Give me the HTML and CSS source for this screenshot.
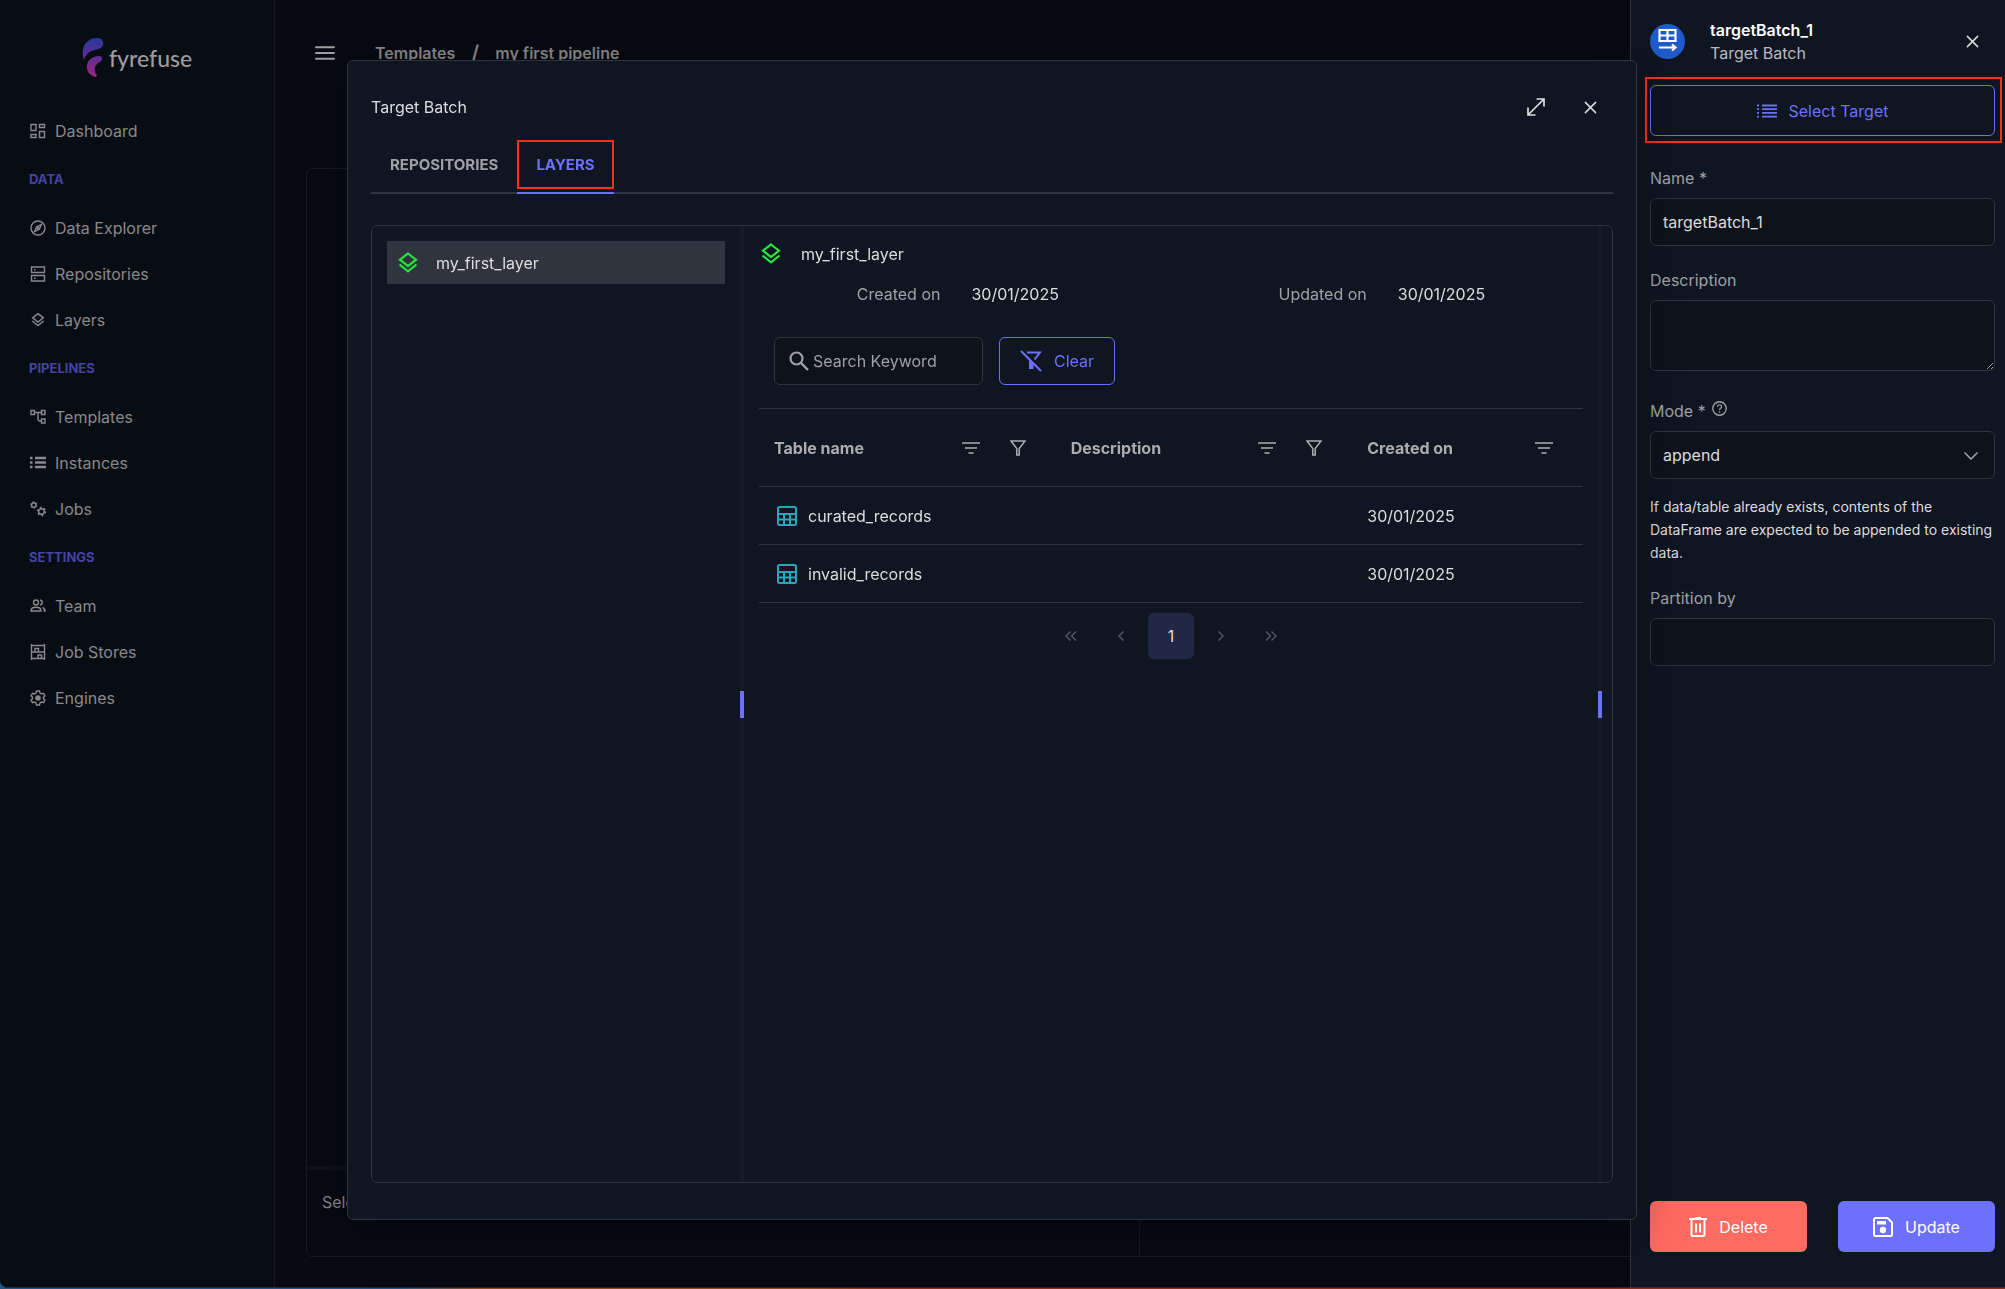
FILE: index.html
```
<!DOCTYPE html>
<html lang="en">
<head>
  <meta charset="UTF-8" />
  <title>Fyrefuse - my first pipeline</title>
  <meta name="viewport" content="width=device-width, initial-scale=1.0" />
  <link rel="stylesheet" href="styles.css">
</head>
<body>
  <!-- shared icons -->
  <svg width="0" height="0" class="sprite" aria-hidden="true">
    <symbol id="i-layers" viewBox="0 0 24 24"><path d="M12 2.5 20 8.7 12 15 4 8.7z M3.5 13.5 12 20.3 20.5 13.5" fill="none" stroke="currentColor" stroke-width="2.2"/></symbol>
    <symbol id="i-close" viewBox="0 0 14 14"><path d="M1.5 1.5 12.5 12.5M12.5 1.5 1.5 12.5" fill="none" stroke="currentColor" stroke-width="1.6" stroke-linecap="round"/></symbol>
    <symbol id="i-sort" viewBox="0 0 18 12"><path d="M0 1h18M3 6h12M6.500 11h5" fill="none" stroke="currentColor" stroke-width="1.600"/></symbol>
    <symbol id="i-filter" viewBox="0 0 16 16"><path d="M1 1h14L9.200 8.500V15H6.800V8.500z" fill="none" stroke="currentColor" stroke-width="1.500"/></symbol>
    <symbol id="i-table" viewBox="0 0 20 20"><path d="M1 2.500Q1 1 2.500 1h15Q19 1 19 2.500v15q0 1.500-1.500 1.500h-15Q1 19 1 17.500zM1 8h18M1 13.500h18M7 8v11M13 8v11" fill="none" stroke="currentColor" stroke-width="2"/></symbol>
  </svg>

  <div class="app">
    <aside class="sidebar">
      <div class="logo">
        <svg width="22" height="40" viewBox="0 0 22 40">
          <defs>
            <linearGradient id="flame" x1="0" y1="0" x2="0" y2="40" gradientUnits="userSpaceOnUse">
              <stop offset="0" stop-color="#26389c" /><stop offset="1" stop-color="#a02483" />
            </linearGradient>
          </defs>
          <path fill="url(#flame)" d="M2 22C-2 10 4 0 15 0c5 0 7 3 6 7-1 3-4 4-8 5-6 1-9 4-11 10z" />
          <path fill="url(#flame)" d="M14 39C8 38 4 33 5 27 6 21 12 18 17 18c4 0 4 4 1 6-4 2-6 5-5 9 0 2 1 3 2 4z" />
        </svg>
        <span>fyrefuse</span>
      </div>

      <nav class="menu">
        <a class="menu-item" href="#">
          <svg viewBox="0 0 16 16"><path d="M1 1.500h5v6H1zM9.500 1.500h5v3h-5zM1 11.500h5v3H1zM9.500 8.500h5v6h-5z" /></svg>
          Dashboard
        </a>
        <h2 class="menu-heading">DATA</h2>
        <a class="menu-item" href="#">
          <svg viewBox="0 0 16 16"><circle cx="8" cy="8" r="7" /><path d="M11.500 4.500 9.300 9.300 4.500 11.500 6.700 6.700z" /><circle cx="8" cy="8" r="1" /></svg>
          Data Explorer
        </a>
        <a class="menu-item" href="#">
          <svg viewBox="0 0 16 16"><path d="M1.500 1h13v5.500h-13zM1.500 9.500h13V15h-13zM4 3.800h1.500M4 12.200h1.500" /></svg>
          Repositories
        </a>
        <a class="menu-item" href="#">
          <svg viewBox="0 0 24 24"><use href="#i-layers" /></svg>
          Layers
        </a>
        <h2 class="menu-heading">PIPELINES</h2>
        <a class="menu-item" href="#">
          <svg viewBox="0 0 16 16"><path d="M1 1.500h3.500v4H1zM11.500 1.500H15v4h-3.500zM11.500 10H15v4h-3.500zM4.500 3.500h7M8 3.500V10q0 2 2 2h1.500" /></svg>
          Templates
        </a>
        <a class="menu-item" href="#">
          <svg viewBox="0 0 16 16"><path class="thick" d="M0 3h2.500M5 3h11M0 7.500h2.500M5 7.500h11M0 12h2.500M5 12h11" /></svg>
          Instances
        </a>
        <a class="menu-item" href="#">
          <svg viewBox="0 0 16 16"><circle cx="3.800" cy="4" r="2.200" /><circle cx="3.800" cy="4" r="3.200" stroke-width="1" stroke-dasharray="1.700 1.650" /><circle cx="11.500" cy="10.500" r="2.800" /><circle cx="11.500" cy="10.500" r="4" stroke-width="1.400" stroke-dasharray="2 2.190" /></svg>
          Jobs
        </a>
        <h2 class="menu-heading">SETTINGS</h2>
        <a class="menu-item" href="#">
          <svg viewBox="0 0 16 16"><circle cx="6" cy="4.500" r="2.500" /><path d="M1 13c0-5 10-5 10 0zM10 2c3 .5 3 4.500 0 5M12.500 9.500c2 .8 2.500 2 2.500 3.500h-1.500" /></svg>
          Team
        </a>
        <a class="menu-item" href="#">
          <svg viewBox="0 0 16 16"><path d="M1.500 0v16M14.500 0v16M1.500 1.500h13M1.500 8h13M1.500 14.500h13M5 8V4.500h3.500V8M8 14.500V11h3.500v3.500" /></svg>
          Job Stores
        </a>
        <a class="menu-item" href="#">
          <svg viewBox="0 0 16 16"><path d="M6.500 1h3l.5 2 1.500.9 2-.6 1.400 2.500L13.500 7.200v1.600l1.400 1.400-1.400 2.500-2-.6L10 13l-.5 2h-3L6 13l-1.500-.9-2 .6-1.400-2.500 1.400-1.400V7.200L1.100 5.800l1.400-2.500 2 .6L6 3z" /><circle cx="8" cy="8" r="2.800" fill="currentColor" stroke="none" /></svg>
          Engines
        </a>
      </nav>
    </aside>

    <main class="main">
      <header class="topbar">
        <button class="icon-btn" aria-label="Toggle menu">
          <svg width="20" height="14" viewBox="0 0 20 14"><path d="M1 1.200h18M1 7h18M1 12.800h18" fill="none" stroke="currentColor" stroke-width="2" stroke-linecap="round" /></svg>
        </button>
        <nav class="breadcrumb"><a href="#">Templates</a><span class="slash">/</span><a href="#">my first pipeline</a></nav>
      </header>
      <section class="canvas">
        <div class="canvas-board"></div>
        <div class="canvas-log">
          <p>Select a node</p>
          <div></div>
        </div>
      </section>
    </main>
  </div>

  <aside class="drawer">
    <header class="drawer-header">
      <svg class="node-icon" width="35" height="35" viewBox="0 0 35 35">
        <circle cx="17.500" cy="17.500" r="17.500" fill="#1f5bcb" />
        <path d="M9.500 6h16v11h-16zM17.500 6v11M9.500 11.500h16M9 23.500h16M22 20.500l3.500 3-3.500 3" fill="none" stroke="#fff" stroke-width="2.200" />
      </svg>
      <div class="drawer-title">
        <strong>targetBatch_1</strong>
        <span>Target Batch</span>
      </div>
      <button class="icon-btn" aria-label="Close panel"><svg width="13" height="13"><use href="#i-close" /></svg></button>
    </header>

    <div class="highlight">
      <button class="btn btn-outline btn-block">
        <svg width="20" height="14" viewBox="0 0 20 14"><path d="M0 1.500h2M5 1.500h15M0 5.200h2M5 5.200h15M0 8.900h2M5 8.900h15M0 12.600h2M5 12.600h15" fill="none" stroke="currentColor" stroke-width="1.800" /></svg>
        Select Target
      </button>
    </div>

    <form class="form">
      <div class="field">
        <label for="name">Name *</label>
        <input id="name" type="text" value="targetBatch_1">
      </div>
      <div class="field field-area">
        <label for="description">Description</label>
        <textarea id="description"></textarea>
      </div>
      <div class="field">
        <label for="mode">Mode *
          <svg width="15" height="15" viewBox="0 0 16 16"><circle cx="8" cy="8" r="7.200" fill="none" stroke="currentColor" stroke-width="1.400" /><path d="M5.800 6.200c0-3 4.400-2.800 4.400-.2C10.200 7.800 8 7.600 8 9.600M8 11v1.500" fill="none" stroke="currentColor" stroke-width="1.300" /></svg>
        </label>
        <div class="select">
          <select id="mode"><option>append</option></select>
          <svg width="14" height="8" viewBox="0 0 14 8"><path d="M1 1l6 6 6-6" fill="none" stroke="currentColor" stroke-width="1.600" stroke-linecap="round" /></svg>
        </div>
        <p class="help">If data/table already exists, contents of the DataFrame are expected to be appended to existing data.</p>
      </div>
      <div class="field">
        <label for="partition">Partition by</label>
        <input id="partition" type="text">
      </div>
    </form>

    <footer class="drawer-footer">
      <button class="btn btn-danger">
        <svg width="18" height="20" viewBox="0 0 18 20"><path d="M0 2h18M6 1h6M2.500 3v14.500Q2.500 19 4 19h10q1.500 0 1.500-1.500V3M7 6.500v9M11 6.500v9" fill="none" stroke="currentColor" stroke-width="2" /></svg>
        Delete
      </button>
      <button class="btn btn-primary">
        <svg width="20" height="20" viewBox="0 0 20 20"><path d="M1 2.500Q1 1 2.500 1H14.500L19 5.500v12q0 1.500-1.500 1.500h-15Q1 19 1 17.500z" fill="none" stroke="currentColor" stroke-width="2" /><path d="M4 4h9v3.500H4z" fill="currentColor" /><circle cx="10" cy="13" r="3.200" fill="currentColor" /></svg>
        Update
      </button>
    </footer>
  </aside>

  <div class="dialog" role="dialog" aria-label="Target Batch">
    <header class="dialog-header">
      <h1>Target Batch</h1>
      <button class="icon-btn" aria-label="Maximize"><svg width="18" height="18" viewBox="0 0 18 18"><path d="M1.500 16.500 16.500 1.500M9.500 1h7.500v7.500M1 9.500V17h7.500" fill="none" stroke="currentColor" stroke-width="1.700" /></svg></button>
      <button class="icon-btn" aria-label="Close"><svg width="13" height="13"><use href="#i-close" /></svg></button>
    </header>

    <div class="tabs" role="tablist">
      <button class="tab" role="tab">REPOSITORIES</button>
      <button class="tab active" role="tab" aria-selected="true">LAYERS</button>
    </div>

    <div class="splitter">
      <div class="layer-list">
        <button class="layer-item"><svg width="24" height="24"><use href="#i-layers" /></svg>my_first_layer</button>
      </div>
      <div class="gutter"><span></span></div>

      <div class="layer-detail">
        <div class="layer-name"><svg width="24" height="24"><use href="#i-layers" /></svg>my_first_layer</div>
        <dl class="dates">
          <div><dt>Created on</dt><dd>30/01/2025</dd></div>
          <div><dt>Updated on</dt><dd>30/01/2025</dd></div>
        </dl>

        <div class="toolbar">
          <div class="search">
            <svg width="20" height="20" viewBox="0 0 20 20"><circle cx="7.500" cy="7.500" r="6" fill="none" stroke="currentColor" stroke-width="2.200" /><path d="M12 12l7 7" stroke="currentColor" stroke-width="2.400" /></svg>
            <input type="text" placeholder="Search Keyword" aria-label="Search Keyword">
          </div>
          <button class="btn btn-outline btn-clear">
            <svg width="22" height="22" viewBox="0 0 22 22"><path d="M1 1l20 20M7 2.500h13l-5.500 7" fill="none" stroke="currentColor" stroke-width="2" /><path d="M9 10l4.500 4.500V19H9z" fill="currentColor" /></svg>
            Clear
          </button>
        </div>

        <table class="records">
          <colgroup><col class="col-name"><col class="col-desc"><col></colgroup>
          <thead>
            <tr>
              <th><div class="th"><span>Table name</span><svg width="18" height="12"><use href="#i-sort" /></svg><svg width="16" height="16"><use href="#i-filter" /></svg></div></th>
              <th><div class="th"><span>Description</span><svg width="18" height="12"><use href="#i-sort" /></svg><svg width="16" height="16"><use href="#i-filter" /></svg></div></th>
              <th><div class="th"><span>Created on</span><svg width="18" height="12"><use href="#i-sort" /></svg></div></th>
            </tr>
          </thead>
          <tbody>
            <tr>
              <td><div class="record"><svg width="20" height="20"><use href="#i-table" /></svg>curated_records</div></td>
              <td></td>
              <td>30/01/2025</td>
            </tr>
            <tr>
              <td><div class="record"><svg width="20" height="20"><use href="#i-table" /></svg>invalid_records</div></td>
              <td></td>
              <td>30/01/2025</td>
            </tr>
          </tbody>
        </table>

        <div class="paginator">
          <button disabled aria-label="First page"><svg width="12" height="10" viewBox="0 0 12 10"><path d="M5.500 .5 1 5l4.500 4.500M11 .5 6.500 5 11 9.500" /></svg></button>
          <button disabled aria-label="Previous page"><svg width="6" height="10" viewBox="0 0 6 10"><path d="M5.500 .5 1 5l4.500 4.500" /></svg></button>
          <button class="current">1</button>
          <button disabled aria-label="Next page"><svg width="6" height="10" viewBox="0 0 6 10"><path d="M.5 .5 5 5 .5 9.500" /></svg></button>
          <button disabled aria-label="Last page"><svg width="12" height="10" viewBox="0 0 12 10"><path d="M1 .5 5.500 5 1 9.500M6.500 .5 11 5 6.500 9.500" /></svg></button>
        </div>
      </div>

      <div class="gutter"><span></span></div>
      <div class="spare"></div>
    </div>
  </div>
</body>
</html>
```

FILE: styles.css
```
* { box-sizing: border-box; margin: 0; padding: 0; }

:root {
  --surface: #0f1521;
  --input: #0e121b;
  --border: #30343f;
  --text: #dddddf;
  --muted: #a0a1a6;
  --primary: #6c70fb;
  --mark: #fb301c;
}

html, body { height: 100%; overflow: hidden; }
body {
  font-family: Inter, "Open Sans", sans-serif;
  font-size: 16px;
  line-height: 24px;
  color: var(--text);
  background: linear-gradient(to right, #265480 20%, #8a4a1c 24%, #8a4a1c 40%, #8a2a1c 44%);
}
button, input, select, textarea { font: inherit; color: inherit; }
button { background: none; border: 0; cursor: pointer; }
a { color: inherit; text-decoration: none; }
svg { flex: none; display: block; }
.sprite { position: absolute; }

.icon-btn {
  display: flex;
  align-items: center;
  justify-content: center;
  width: 46px;
  height: 46px;
}

/* PAGE BEHIND THE DIALOG */
.app {
  display: flex;
  height: calc(100% - 1px);
  background: #070a12;
  border-bottom: 1px solid #26272b;
  border-bottom-left-radius: 8px;
  color: #88898b;
}
.sidebar {
  width: 275px;
  background: #080d14;
  border-right: 1px solid #181b22;
  border-bottom-left-radius: 8px;
}
.logo {
  display: flex;
  align-items: center;
  gap: 5px;
  height: 70px;
  margin: 23px 0 15px 82px;
  font-family: Lato, sans-serif;
  font-size: 23px;
  font-weight: 500;
  color: #9b9c9d;
}
.menu-item {
  display: flex;
  align-items: center;
  gap: 9px;
  height: 46px;
  padding-left: 30px;
}
.menu-item svg {
  width: 16px;
  height: 16px;
  fill: none;
  stroke: currentColor;
  stroke-width: 1.4px;
}
.menu-item .thick { stroke-width: 2.6px; }
.menu-heading {
  height: 51px;
  padding-left: 29px;
  font-size: 13px;
  line-height: 50px;
  font-weight: 700;
  color: #4344a2;
}

.main {
  flex: 1;
  display: flex;
  flex-direction: column;
  min-width: 0;
  padding: 30px 31px 30px;
}
.topbar {
  display: flex;
  align-items: center;
  height: 46px;
  margin-left: -4px;
  color: #a0a0a1;
}
.breadcrumb {
  display: flex;
  margin-left: 27px;
  font-weight: 600;
  color: #88898b;
}
.slash {
  width: 40px;
  text-align: center;
  font-size: 20px;
}
.canvas {
  flex: 1;
  display: flex;
  flex-direction: column;
  margin-top: 92px;
  border: 1px solid #181b22;
  border-radius: 6px;
}
.canvas-board { flex: 1; }
.canvas-log {
  display: grid;
  grid-template-columns: 1fr 1fr;
  height: 90px;
  border-top: 4px solid #0d1119;
}
.canvas-log p { padding: 20px 15px; border-right: 1px solid #181b22; }

/* RIGHT DRAWER */
.drawer {
  position: fixed;
  top: 0;
  right: 0;
  bottom: 1px;
  width: 375px;
  display: flex;
  flex-direction: column;
  padding: 18px 10px 35px 19px;
  background: var(--surface);
  border-left: 1px solid var(--border);
  border-bottom: 1px solid var(--border);
}
.drawer-header {
  display: flex;
  align-items: center;
  height: 47px;
  margin-bottom: 20px;
}
.drawer-title {
  flex: 1;
  display: flex;
  flex-direction: column;
  margin-left: 25px;
  line-height: 23px;
  color: #b9babd;
}
.drawer-title strong { font-weight: 600; color: #fff; }
.highlight { position: relative; margin-bottom: 30px; }
.highlight::after {
  content: "";
  position: absolute;
  inset: -8px -7px -7px -5px;
  border: 2px solid var(--mark);
  pointer-events: none;
}

.btn {
  display: flex;
  align-items: center;
  justify-content: center;
  gap: 12px;
  height: 51px;
  border-radius: 6px;
}
.btn-block { width: 100%; }
.btn-outline { border: 1px solid var(--primary); color: var(--primary); }
.btn-danger { background: #ff6a61; color: #fff; }
.btn-primary { background: var(--primary); color: #fff; }

.field { display: flex; flex-direction: column; margin-bottom: 22px; }
.field-area { margin-bottom: 28px; }
.field label {
  display: flex;
  gap: 6px;
  margin-bottom: 8px;
  color: var(--muted);
}
.field label svg { margin-top: 2px; }
input, textarea, select {
  width: 100%;
  height: 48px;
  padding: 0 12px;
  background: var(--input);
  border: 1px solid var(--border);
  border-radius: 6px;
  outline: 0;
}
textarea { height: 71px; }
.select { position: relative; }
select { appearance: none; }
.select svg {
  position: absolute;
  top: 21px;
  right: 17px;
  color: var(--muted);
  pointer-events: none;
}
.help { margin-top: 16px; font-size: 14px; line-height: 23px; }
.drawer-footer {
  display: grid;
  grid-template-columns: 1fr 1fr;
  gap: 31px;
  margin-top: auto;
}

/* DIALOG */
.dialog {
  position: fixed;
  inset: 60px 368px 69px 347px;
  display: flex;
  flex-direction: column;
  padding: 23px 23px 36px;
  background: var(--surface);
  border: 1px solid var(--border);
  border-radius: 6px;
  box-shadow: 0 10px 48px rgba(0, 0, 0, .35);
}
.dialog-header {
  display: flex;
  align-items: center;
  gap: 8px;
  height: 46px;
  margin-bottom: 10px;
}
.dialog-header h1 { flex: 1; font-size: 16px; font-weight: 400; }

.tabs {
  display: flex;
  border-bottom: 2px solid var(--border);
}
.tab {
  position: relative;
  height: 54px;
  margin-bottom: -2px;
  padding: 0 19px 2px;
  border-bottom: 2px solid transparent;
  font-size: 15px;
  font-weight: 700;
  color: var(--muted);
}
.tab.active { color: var(--primary); border-color: var(--primary); }
.tab.active::after {
  content: "";
  position: absolute;
  inset: 0 0 3px;
  border: 2px solid var(--mark);
}

.splitter {
  flex: 1;
  display: flex;
  margin-top: 31px;
  border: 1px solid var(--border);
  border-radius: 6px;
}
.layer-list { width: calc(30% - 4px); padding: 15px; }
.layer-item {
  display: flex;
  align-items: center;
  gap: 16px;
  width: 100%;
  height: 43px;
  padding-left: 9px;
  background: #30343f;
}
.layer-item svg, .layer-name svg { color: #28e53f; }
.gutter {
  display: flex;
  align-items: center;
  width: 4px;
  background: #151a26;
}
.gutter span { width: 4px; height: 27px; background: var(--primary); }
.layer-detail { flex: 1; padding: 15px; }
.spare { width: 10px; }

.layer-name { display: flex; align-items: center; gap: 18px; height: 26px; }
.dates {
  display: flex;
  justify-content: space-around;
  gap: 24px;
  margin-top: 15px;
}
.dates div { display: flex; gap: 31px; }
.dates dt { color: var(--muted); }

.toolbar { display: flex; gap: 16px; margin: 31px 15px 23px; }
.search { position: relative; width: 209px; color: var(--muted); }
.search svg { position: absolute; top: 14px; left: 15px; }
.search input { padding-left: 38px; }
.search input::placeholder { color: var(--muted); opacity: 1; }
.btn-clear { width: 116px; height: 48px; }

.records {
  width: 100%;
  table-layout: fixed;
  border-collapse: collapse;
  border-top: 1px solid var(--border);
}
.col-name, .col-desc { width: 36%; }
.records tr { border-bottom: 1px solid var(--border); }
.records th {
  height: 78px;
  padding: 0 30px 0 15px;
  font-weight: 700;
  text-align: left;
  color: #acacb0;
}
.th { display: flex; align-items: center; gap: 30px; }
.th span { flex: 1; }
.records td { height: 58px; padding: 0 15px; }
.record { display: flex; align-items: center; gap: 11px; padding-left: 3px; }
.record svg { color: #2aa5b9; }

.paginator { display: flex; justify-content: center; gap: 4px; margin-top: 10px; }
.paginator button {
  display: flex;
  align-items: center;
  justify-content: center;
  width: 46px;
  height: 46px;
  border-radius: 6px;
  color: #565962;
}
.paginator svg { fill: none; stroke: currentColor; stroke-width: 1.4px; }
.paginator .current { background: #212744; color: var(--text); }
```
